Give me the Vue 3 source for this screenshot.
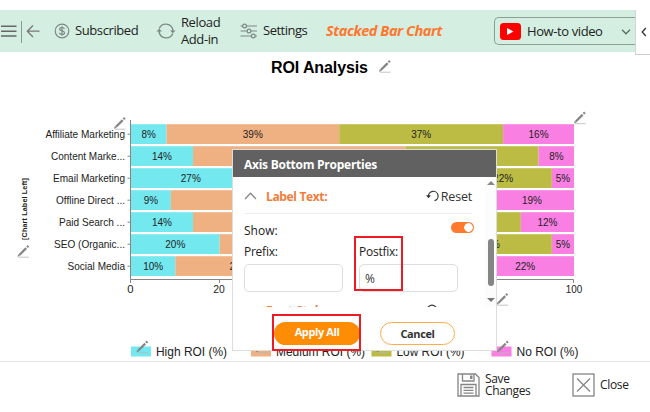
<template>
  <div class="addin">
    <header class="toolbar">
      <svg class="burger" width="40" height="42" viewBox="0 10 40 42" fill="none" stroke="#666">
        <path d="M1 26.2H16.500M1 31.2H16.500M1 36H16.500" stroke-width="1.600" />
        <path d="M21.500 21V43" stroke="#8b9a92" stroke-width="1" />
        <path d="M39.500 31.2H27.500M33 25.500L27.300 31.2L33 37" stroke="#777" stroke-width="1.300" />
      </svg>
      <div class="tool subscribed">
        <svg width="16" height="16" viewBox="0 0 16 16" fill="none" stroke="#7d8983" stroke-width="1.200">
          <circle cx="8" cy="8" r="6.800" />
          <path d="M10.400 6C10.200 4.900 9.200 4.500 8 4.500C6.700 4.500 5.700 5.100 5.700 6.200C5.700 8.500 10.500 7.300 10.500 9.700C10.500 10.900 9.400 11.500 8 11.500C6.600 11.500 5.600 10.900 5.500 9.800M8 3.200V12.800" />
        </svg>
        <span>Subscribed</span>
      </div>
      <div class="tool reload">
        <svg width="20" height="18" viewBox="0 0 20 18" fill="none" stroke="#7d8983" stroke-width="1.400">
          <path d="M3.200 6.500A7.200 7.200 0 0 1 16.800 7.500V9.500M16.800 11.500A7.200 7.200 0 0 1 3.200 10.500V8.500" />
          <path d="M14 8.500H19.600L16.800 11.300ZM0.400 9.500H6L3.200 6.700Z" fill="#7d8983" stroke="none" />
        </svg>
        <span>Reload<br />Add-in</span>
      </div>
      <div class="tool settings">
        <svg width="18" height="16" viewBox="0 0 18 16" fill="none" stroke="#7d8983" stroke-width="1.200">
          <path d="M0.500 3H3M6.500 3H17M0.500 8H7.200M10.800 8H17M0.500 13H11.500M15 13H17" />
          <circle cx="4.600" cy="3" r="1.900" />
          <circle cx="9" cy="8" r="1.900" />
          <circle cx="13.300" cy="13" r="1.900" />
        </svg>
        <span>Settings</span>
      </div>
      <span class="chart-name">Stacked Bar Chart</span>
      <button class="video">
        <svg width="21" height="17" viewBox="0 0 21 17">
          <rect width="21" height="17" rx="3.500" fill="#f00" />
          <path d="M7 5L13.500 8.500L7 12Z" fill="#fff" />
        </svg>
        <span>How-to video</span>
        <svg class="caret" width="10" height="6" viewBox="0 0 10 6" fill="none" stroke="#5d6b64" stroke-width="1.300">
          <path d="M1 0.800L5 4.800L9 0.800" />
        </svg>
      </button>
      <div class="side-tab">
        <svg width="6" height="10" viewBox="0 0 6 10" fill="none" stroke="#333" stroke-width="1.300">
          <path d="M4.800 1L1.200 5L4.800 9" />
        </svg>
      </div>
    </header>

    <svg class="chart" width="650" height="309" viewBox="0 52 650 309">
      <text class="title" x="271" y="73" textLength="97">ROI Analysis</text>

      <g v-for="(row, r) in bars" :key="row.label">
        <text
          class="cat"
          x="125"
          :y="rowY(r) + 14"
          text-anchor="end"
          :textLength="row.width"
          lengthAdjust="spacingAndGlyphs"
        >{{ row.label }}</text>
        <path class="axis" :d="`M127.500 ${rowY(r) + 10}H131`" />
        <rect v-for="s in row.segments" :key="s.color" :x="s.x" :y="rowY(r)" :width="s.w" height="19.800" :fill="s.color" />
        <text
          v-for="s in row.segments"
          :key="s.x"
          class="val"
          :x="s.x + s.w / 2"
          :y="rowY(r) + 13.300"
          text-anchor="middle"
          :textLength="s.value > 9 ? 20 : 14.300"
          lengthAdjust="spacingAndGlyphs"
        >{{ s.value }}%</text>
      </g>

      <path class="axis" d="M130.500 120V279.500H573.500V283M130.500 279.500V283M219.500 279.500V283" />
      <text class="tick" x="130.500" y="293.300" text-anchor="middle">0</text>
      <text class="tick" x="219" y="293.300" text-anchor="middle" textLength="11.500" lengthAdjust="spacingAndGlyphs">20</text>
      <text class="tick" x="574" y="293.300" text-anchor="middle" textLength="16.500" lengthAdjust="spacingAndGlyphs">100</text>

      <text class="side-label" transform="translate(27 240) rotate(-90)" textLength="62">[Chart Label Left]</text>

      <g v-for="item in legend" :key="item.text">
        <rect :x="item.x" y="346.500" width="20" height="10" :fill="item.color" />
        <text class="legend" :x="item.x + 25" y="355.600" :textLength="item.w" lengthAdjust="spacingAndGlyphs">{{ item.text }}</text>
      </g>

      <g v-for="p in pencils" :key="p.join()" :transform="`translate(${p[0]} ${p[1]})`" fill="none">
        <path d="M1.800 10L8.700 3.100" stroke="#858585" stroke-width="2.200" />
        <path d="M9.500 2.300L10.900 0.900" stroke="#858585" stroke-width="2.200" />
        <path d="M0 11.800L0.700 9.300L2.500 11.100Z" fill="#858585" />
        <path d="M1 12.200H11.500" stroke="#b5b5b5" stroke-width="0.800" />
      </g>
    </svg>

    <footer class="footer">
      <div class="action save">
        <svg width="23" height="24" viewBox="0 0 23 24" fill="none" stroke="#858585" stroke-width="1.300">
          <path d="M1 1H18.500L22 4.500V23H1Z" />
          <path d="M5.500 1V8H17V1M4 23V11.500H19V23M6.500 14.500H16.500M6.500 17.300H16.500M6.500 20.100H16.500" />
          <path d="M13 2.500H15.500V6H13Z" fill="#858585" stroke="none" />
        </svg>
        <span>Save<br />Changes</span>
      </div>
      <div class="action close">
        <svg width="23" height="24" viewBox="0 0 23 24" fill="none" stroke="#858585" stroke-width="1.300">
          <rect x="1" y="1" width="21" height="22" />
          <path d="M5 5.500L18 18.500M18 5.500L5 18.500" />
        </svg>
        <span>Close</span>
      </div>
    </footer>

    <section class="dialog">
      <h3>Axis Bottom Properties</h3>
      <div class="dialog-body">
        <div class="fields">
          <div class="section-head">
            <svg width="13" height="8" viewBox="0 0 13 8" fill="none" stroke="#888" stroke-width="1.300">
              <path d="M1 7L6.500 1.200L12 7" />
            </svg>
            <b>Label Text:</b>
            <span class="reset">
              <svg width="13" height="12" viewBox="0 0 13 12" fill="none" stroke="#333" stroke-width="1.200">
                <path d="M2.500 6.500A4.800 4.800 0 1 1 8.500 10.700" />
                <path d="M0 5.300H5L2.500 8.300Z" fill="#333" stroke="none" />
              </svg>
              Reset
            </span>
          </div>
          <div class="show-row">
            <label>Show:</label>
            <span class="switch"></span>
          </div>
          <div class="pair">
            <div class="field">
              <label>Prefix:</label>
              <input type="text" />
            </div>
            <div class="field">
              <label>Postfix:</label>
              <input v-model="postfix" type="text" />
            </div>
          </div>
          <div class="next-head">
            <b>Font Style:</b>
            <svg width="12" height="12" viewBox="0 0 12 12" fill="none" stroke="#333" stroke-width="1.200">
              <circle cx="6" cy="6" r="4.800" />
            </svg>
          </div>
        </div>
        <div class="scrollbar">
          <i class="up"></i>
          <i class="thumb"></i>
          <i class="down"></i>
        </div>
      </div>
      <div class="buttons">
        <button class="apply">Apply All</button>
        <button class="cancel">Cancel</button>
      </div>
      <div class="mark mark-postfix"></div>
      <div class="mark mark-apply"></div>
    </section>
  </div>
</template>

<script setup>
import { ref } from 'vue';

const postfix = ref('%');

const colors = ['#73e8ef', '#efb182', '#bcbc45', '#f97fe2'];

const data = [
  { label: 'Affiliate Marketing', width: 79.5, values: [8, 39, 37, 16] },
  { label: 'Content Marke...', width: 74, values: [14, 48, 30, 8] },
  { label: 'Email Marketing', width: 72, values: [27, 46, 22, 5] },
  { label: 'Offline Direct ...', width: 69, values: [9, 38, 34, 19] },
  { label: 'Paid Search ...', width: 66, values: [14, 44, 30, 12] },
  { label: 'SEO (Organic...', width: 71, values: [20, 47, 28, 5] },
  { label: 'Social Media', width: 57.5, values: [10, 29, 39, 22] }
];

const bars = data.map(({ label, width, values }) => {
  let sum = 0;
  const segments = values.map((value, i) => {
    const x = 131 + sum * 4.43;
    sum += value;
    return { x, w: value * 4.43, value, color: colors[i] };
  });
  return { label, width, segments };
});

const rowY = (r) => 124.2 + r * 22;

const legend = [
  { text: 'High ROI (%)', x: 131, w: 71, color: colors[0] },
  { text: 'Medium ROI (%)', x: 251, w: 89, color: colors[1] },
  { text: 'Low ROI (%)', x: 371.5, w: 68, color: colors[2] },
  { text: 'No ROI (%)', x: 491.5, w: 62, color: colors[3] }
];

const pencils = [
  [379, 60], [114, 117], [574, 111.5], [17.5, 245], [496.5, 293],
  [136.5, 340.5], [256, 340.5], [376.5, 340.5], [497, 340.5]
];
</script>

<style>
body { margin: 0; background: #fff; }
</style>

<style scoped>
.addin {
  position: relative;
  width: 650px;
  height: 412px;
  padding-top: 10px;
  box-sizing: border-box;
  overflow: hidden;
  background: #fff;
  font-family: "Open Sans", "Noto Sans", sans-serif;
  color: #222;
}
svg { display: block; flex: none; }
button { font-family: inherit; padding: 0; }

.toolbar {
  position: relative;
  display: flex;
  align-items: center;
  width: 635px;
  height: 42px;
  background: #d4efe1;
  font-size: 13px;
  line-height: 17.5px;
  white-space: nowrap;
}
.tool { display: flex; align-items: center; }
.subscribed { width: 102px; margin-left: 14px; gap: 5px; letter-spacing: -.4px; }
.reload { width: 84px; gap: 5px; letter-spacing: -.4px; }
.settings { width: 86px; gap: 5px; letter-spacing: -.5px; }
.chart-name {
  width: 168px;
  color: #ff762d;
  font-weight: 700;
  font-style: italic;
  font-size: 14.5px;
  letter-spacing: -.45px;
}
.video {
  display: flex;
  align-items: center;
  width: 141px;
  height: 28px;
  padding-left: 5px;
  box-sizing: border-box;
  border: 1px solid #8c9e95;
  border-right: 0;
  border-radius: 5px 0 0 5px;
  background: none;
  font-size: 13px;
  letter-spacing: -.4px;
  color: #222;
}
.video span { margin-left: 6px; }
.caret { margin: 2px 4px 0 auto; }
.side-tab {
  position: absolute;
  left: 635px;
  top: 0;
  width: 15px;
  height: 45px;
  box-sizing: border-box;
  border-left: 1px solid #d5d5d5;
  border-bottom: 1px solid #ccc;
  background: #fff;
  padding: 17px 0 0 5px;
}

.chart { font-family: "Liberation Sans", Arial, sans-serif; fill: #222; }
.title { font-size: 16px; font-weight: 700; fill: #000; }
.cat { font-size: 11.3px; }
.val { font-size: 11.3px; }
.tick { font-size: 11.3px; }
.side-label { font-size: 7.2px; font-weight: 700; }
.legend { font-size: 12.6px; }
.axis { fill: none; stroke: #858585; stroke-width: 1; }

.footer {
  display: flex;
  align-items: center;
  height: 51px;
  box-sizing: border-box;
  border-top: 1px solid #e2e2e2;
  padding: 0 0 4px 457px;
  font-size: 12px;
  letter-spacing: -.35px;
  line-height: 12.5px;
}
.action { display: flex; align-items: center; gap: 5px; }
.save { width: 115px; }

.dialog {
  position: absolute;
  left: 232px;
  top: 149px;
  width: 265px;
  height: 202px;
  box-sizing: border-box;
  border: 1px solid #ddd;
  background: #fff;
  font-size: 12px;
}
.dialog h3 {
  margin: 0;
  height: 27px;
  padding: 2px 0 0 11px;
  box-sizing: border-box;
  background: #616161;
  color: #fff;
  font-size: 12px;
  letter-spacing: -.26px;
  line-height: 26px;
}
.dialog-body { display: flex; height: 130px; overflow: hidden; }
.fields { width: 214px; padding-left: 11px; flex: none; }
.section-head {
  display: flex;
  align-items: center;
  width: 228px;
  height: 37px;
  padding-top: 2px;
  box-sizing: border-box;
  border-bottom: 1px solid #eee;
  color: #ef7d3b;
}
.section-head b { margin-left: 9px; letter-spacing: -.35px; }
.reset {
  display: flex;
  align-items: center;
  gap: 2px;
  margin-left: auto;
  font-size: 12.5px;
  letter-spacing: -.2px;
  color: #333;
}
.show-row { display: flex; align-items: center; justify-content: space-between; width: 230px; height: 31px; }
.show-row label { padding-top: 1px; }
.switch {
  width: 23px;
  height: 11px;
  border-radius: 6px;
  background: radial-gradient(circle at 17.5px 5.5px, #fff 4px, #ff7a2c 4.6px);
  margin-bottom: 5px;
}
.pair { display: flex; gap: 16px; letter-spacing: -.25px; }
.field label { display: block; height: 19px; line-height: 14px; }
.field input {
  display: block;
  width: 99px;
  height: 28px;
  padding: 0 5px;
  box-sizing: border-box;
  border: 1px solid #ddd;
  border-radius: 5px;
  background: #fff;
  font: 12px "Open Sans", sans-serif;
  color: #333;
}
.next-head {
  display: flex;
  justify-content: space-between;
  width: 172px;
  padding: 11px 0 0 22px;
  color: #ef7d3b;
  line-height: 16px;
}
.next-head svg { margin-top: 1px; }
.scrollbar {
  display: flex;
  flex-direction: column;
  align-items: center;
  width: 11px;
  margin-left: auto;
  background: #fcfcfc;
}
.up { margin-top: 4px; border: 4px solid transparent; border-top: 0; border-bottom: 4px solid #888; }
.thumb { width: 6px; height: 47px; margin-top: 54px; border-radius: 3px; background: #858585; }
.down { margin-top: 12px; border: 4px solid transparent; border-bottom: 0; border-top: 4px solid #777; }

.buttons { display: flex; gap: 20px; padding: 15px 0 0 41px; }
.buttons button { height: 23px; border-radius: 12px; font-size: 11px; font-weight: 700; line-height: 18px; }
.buttons .apply { width: 86px; padding-bottom: 3px; border: 0; background: #ff8c05; color: #fff; letter-spacing: -.4px; }
.buttons .cancel { width: 75px; border: 1px solid #ffad4a; background: #fff; color: #333; letter-spacing: -.4px; }

.mark { position: absolute; border: 2px solid #ed1c24; box-sizing: border-box; }
.mark-postfix { left: 121px; top: 86px; width: 49px; height: 55px; }
.mark-apply { left: 39px; top: 164px; width: 89px; height: 37px; }
</style>
